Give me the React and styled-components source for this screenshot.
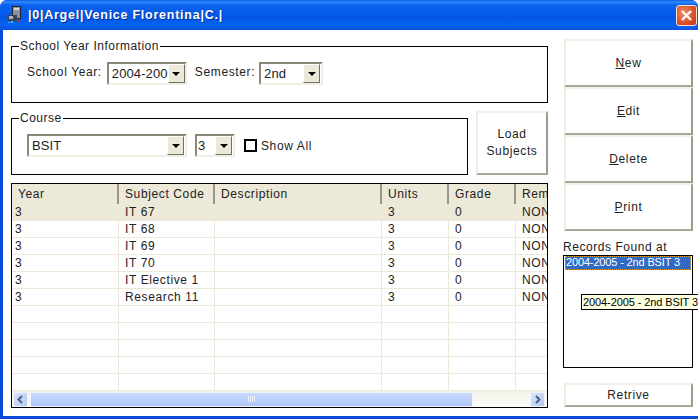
import React from 'react';
import styled, { createGlobalStyle } from 'styled-components';

const Global = createGlobalStyle`
  html, body { margin: 0; padding: 0; background: #fff; overflow: hidden; }
  * { box-sizing: border-box; }
`;
const Win = styled.div`
  width: 698px; height: 419px; display: flex; flex-direction: column;
  font: 12px "Liberation Sans", Arial, sans-serif; letter-spacing: .62px; color: #222;
  background: #0a48d8; border-radius: 7px 7px 0 0; overflow: hidden;
`;
const TitleBar = styled.div`
  height: 30px; flex: none; display: flex; align-items: center; padding: 0 1px 0 6px;
  background: linear-gradient(180deg, #0a5ae4 0, #2f8bfb 2px, #0a62ee 5px, #0456e6 18px, #0663f0 25px, #0a55dc 30px);
`;
const AppIcon = styled.svg` width: 16px; height: 18px; flex: none; margin-right: 6px; `;
const TitleText = styled.div`
  font: bold 12.5px "Liberation Sans", Arial, sans-serif; letter-spacing: .75px; color: #fff;
  text-shadow: 1px 1px 0 #0a2f98; flex: 1; white-space: pre;
`;
const CloseBtn = styled.div`
  width: 21px; height: 21px; border: 1px solid #f7e2da; border-radius: 3px;
  background: radial-gradient(circle at 35% 35%, #ee8a64, #d6471f 70%, #c23a18);
  display: flex; align-items: center; justify-content: center;
`;
const Frame = styled.div`
  flex: 1; margin: 0 0 3px 3px; background: #fff; display: flex; min-height: 0;
`;
const Left = styled.div`
  width: 546px; flex: none; padding: 9px 0 0 8px; display: flex; flex-direction: column;
`;
const Field = styled.fieldset`
  margin: 0; padding: 0; border: 1px solid #000; min-width: 0;
  width: ${p => p.$w}px; height: ${p => p.$h}px; flex: none;
`;
const Legend = styled.legend`
  padding: 0 1px; margin-left: 7px; line-height: 15px; font-size: 12px; letter-spacing: .5px;
`;
const FieldRow = styled.div`
  display: flex; align-items: center; padding: 8px 0 0 15px; gap: ${p => p.$gap || 0}px;
`;
const CourseRow = styled.div`
  display: flex; gap: 8px; margin-top: 8px; align-items: flex-end; height: 64px;
`;
const Label = styled.span`
  white-space: nowrap; margin-top: -3px; margin-left: ${p => p.$ml || 0}px;
`;
const Combo = styled.div`
  width: ${p => p.$w}px; height: 23px; flex: none; display: flex; align-items: center; justify-content: space-between;
  background: #fff; padding: 0 1px 0 ${p => p.$pl ?? 3}px; margin-left: ${p => p.$ml || 0}px; white-space: nowrap;
  border: 2px solid; border-color: #8a8877 #f0eee3 #f0eee3 #8a8877; font-size: 13px; letter-spacing: .1px;
`;
const Arrow = styled.div`
  width: 17px; height: 19px; flex: none; background: #ece9d8; display: flex; align-items: center; justify-content: center;
  border: 1px solid; border-color: #fff #716f64 #716f64 #fff;
  &::after { content: ""; border: 4px solid transparent; border-top: 4px solid #000; border-bottom: 0; }
`;
const CheckRow = styled.label`
  display: flex; align-items: center; gap: 4px; margin-left: 9px;
`;
const Check = styled.span`
  width: 13px; height: 13px; border: 2px solid #000; background: #fff; display: block;
`;
const Button = styled.div`
  width: ${p => p.$w}px; height: ${p => p.$h}px; flex: none; display: flex; align-items: center; justify-content: center;
  text-align: center; background: #fff; line-height: 17px;
  border: 2px solid; border-color: #f1efe4 #9d9b8c #a8a698 #f1efe4;
  u { text-decoration: underline; }
`;
const Grid = styled.div`
  width: 537px; height: 225px; margin-top: 8px; border: 1px solid #000; display: flex; flex-direction: column; overflow: hidden;
`;
const Head = styled.div`
  height: 20px; flex: none; display: flex; background: #ece9d8; overflow: hidden;
`;
const HeadCell = styled.div`
  width: ${p => p.$w}px; flex: none; padding: 3px 0 0 6px; white-space: nowrap; overflow: hidden;
  border-right: ${p => p.$last ? 0 : 2}px solid #9a988a;
`;
const Body = styled.div`
  flex: 1; display: flex; flex-direction: column; min-height: 0; overflow: hidden;
`;
const Row = styled.div`
  height: 17px; flex: none; display: flex; background: ${p => p.$sel ? '#ece9d8' : '#fff'};
  border-bottom: 1px solid #ece9d8;
`;
const Cell = styled.div`
  width: ${p => p.$w}px; flex: none; padding: 0 0 0 ${p => p.$pad}px; line-height: 16px; white-space: nowrap; overflow: hidden;
  border-right: 1px solid ${p => p.$last ? 'transparent' : '#ece9d8'};
`;
const HScroll = styled.div`
  height: 16px; flex: none; display: flex; align-items: center; background: linear-gradient(#f3f2ea, #fdfdf9);
  padding: 0 2px 0 1px;
`;
const ScrollBtn = styled.div`
  width: 15px; height: 15px; flex: none; border: 1px solid #eef3fd; border-radius: 2px;
  background: linear-gradient(135deg, #d8e4fb, #b4c9f5); display: flex; align-items: center; justify-content: center;
`;
const Thumb = styled.div`
  width: 443px; height: 15px; margin-left: 2px; flex: none; border: 1px solid #f0f4fe; border-radius: 2px;
  background: linear-gradient(#c8d8fb, #b9cefa 60%, #aec6f6);
  display: flex; align-items: center; justify-content: center;
`;
const Grip = styled.svg` width: 8px; height: 6px; `;
const Spacer = styled.div` flex: 1; `;
const Right = styled.div`
  flex: 1; padding: 9px 0 0 15px; display: flex; flex-direction: column; position: relative;
`;
const RecLabel = styled.div`
  margin: 9px 0 0 -1px; line-height: 14px; font-size: 12px; letter-spacing: .55px;
`;
const ListBox = styled.div`
  width: 130px; height: 113px; margin: 1px 0 0 -1px; border: 1px solid #000; background: #fff; padding: 0 1px;
`;
const ListItem = styled.div`
  height: 14px; background: #316ac5; color: #fff; outline: 1px dotted #e0a030; outline-offset: -1px;
  line-height: 13px; font-size: 11px; letter-spacing: -.15px; padding-left: 1px; white-space: nowrap;
`;
const Tip = styled.div`
  position: absolute; left: 32px; top: 264px; height: 16px; width: 125px; background: #ffffe1; border: 1px solid #000;
  line-height: 14px; padding-left: 1px; font-size: 11px; letter-spacing: -.1px; color: #000; white-space: nowrap;
`;
const RetButton = styled(Button)` margin-top: 15px; `;

const cols = [107, 96, 167, 67, 67, 33];
const heads = ['Year', 'Subject Code', 'Description', 'Units', 'Grade', 'Remarks'];
const codes = ['IT 67', 'IT 68', 'IT 69', 'IT 70', 'IT Elective 1', 'Research 11'];

export default function App() {
  return (
    <Win>
      <Global />
      <TitleBar>
        <AppIcon viewBox="0 0 16 18">
          <rect x="6.5" y="0.5" width="8" height="12" fill="#8a909c" stroke="#20242e" />
          <rect x="8" y="2" width="5" height="2" fill="#d5d9e0" />
          <path d="M2 9h9v6H2z" fill="#3c4250" />
          <path d="M3 10h4v3H3z" fill="#aab2c0" />
          <path d="M2 16h2v1H2zM5 15h2v2H5z" fill="#25c8f0" />
          <rect x="11" y="14" width="3" height="2" fill="#d02030" />
        </AppIcon>
        <TitleText>|0|Argel|Venice Florentina|C.|</TitleText>
        <CloseBtn>
          <svg width="13" height="13" viewBox="0 0 13 13"><path d="M2 2l9 9M11 2l-9 9" stroke="#fff" strokeWidth="2.4" /></svg>
        </CloseBtn>
      </TitleBar>
      <Frame>
        <Left>
          <Field $w={537} $h={64}>
            <Legend>School Year Information</Legend>
            <FieldRow $gap={5}>
              <Label>School Year:</Label>
              <Combo $w={80}>2004-200<Arrow /></Combo>
              <Label $ml={3}>Semester:</Label>
              <Combo $w={64} $ml={-1}>2nd<Arrow /></Combo>
            </FieldRow>
          </Field>
          <CourseRow>
            <Field $w={457} $h={64}>
              <Legend>Course</Legend>
              <FieldRow>
                <Combo $w={160}>BSIT<Arrow /></Combo>
                <Combo $w={40} $ml={8} $pl={1}>3<Arrow /></Combo>
                <CheckRow><Check />Show All</CheckRow>
              </FieldRow>
            </Field>
            <Button $w={72} $h={64}>Load<br />Subjects</Button>
          </CourseRow>
          <Grid>
            <Head>
              {heads.map((h, i) => <HeadCell key={h} $w={cols[i]} $last={i === 5}>{h}</HeadCell>)}
            </Head>
            <Body>
              {Array.from({ length: 11 }).map((_, r) => {
                const has = r < 6;
                const vals = has ? ['3', codes[r], '', '3', '0', 'NONE'] : ['', '', '', '', '', ''];
                return (
                  <Row key={r} $sel={r === 0}>
                    {vals.map((v, i) => <Cell key={i} $w={cols[i]} $pad={i === 0 ? 3 : 6} $last={r === 0 || i === 5}>{v}</Cell>)}
                  </Row>
                );
              })}
            </Body>
            <HScroll>
              <ScrollBtn>
                <svg width="9" height="9" viewBox="0 0 9 9"><path d="M6 1L2.5 4.5 6 8" fill="none" stroke="#4d6185" strokeWidth="2" /></svg>
              </ScrollBtn>
              <Thumb>
                <Grip viewBox="0 0 8 6"><path d="M.5 0v6M2.5 0v6M4.5 0v6M6.5 0v6" stroke="#eef3fe" /></Grip>
              </Thumb>
              <Spacer />
              <ScrollBtn>
                <svg width="9" height="9" viewBox="0 0 9 9"><path d="M3 1l3.5 3.5L3 8" fill="none" stroke="#4d6185" strokeWidth="2" /></svg>
              </ScrollBtn>
            </HScroll>
          </Grid>
        </Left>
        <Right>
          <Button $w={129} $h={48}><span><u>N</u>ew</span></Button>
          <Button $w={129} $h={48}><span><u>E</u>dit</span></Button>
          <Button $w={129} $h={48}><span><u>D</u>elete</span></Button>
          <Button $w={129} $h={48}><span><u>P</u>rint</span></Button>
          <RecLabel>Records Found at</RecLabel>
          <ListBox><ListItem>2004-2005 - 2nd BSIT 3</ListItem></ListBox>
          <Tip>2004-2005 - 2nd BSIT 3</Tip>
          <RetButton $w={129} $h={24}>Retrive</RetButton>
        </Right>
      </Frame>
    </Win>
  );
}
